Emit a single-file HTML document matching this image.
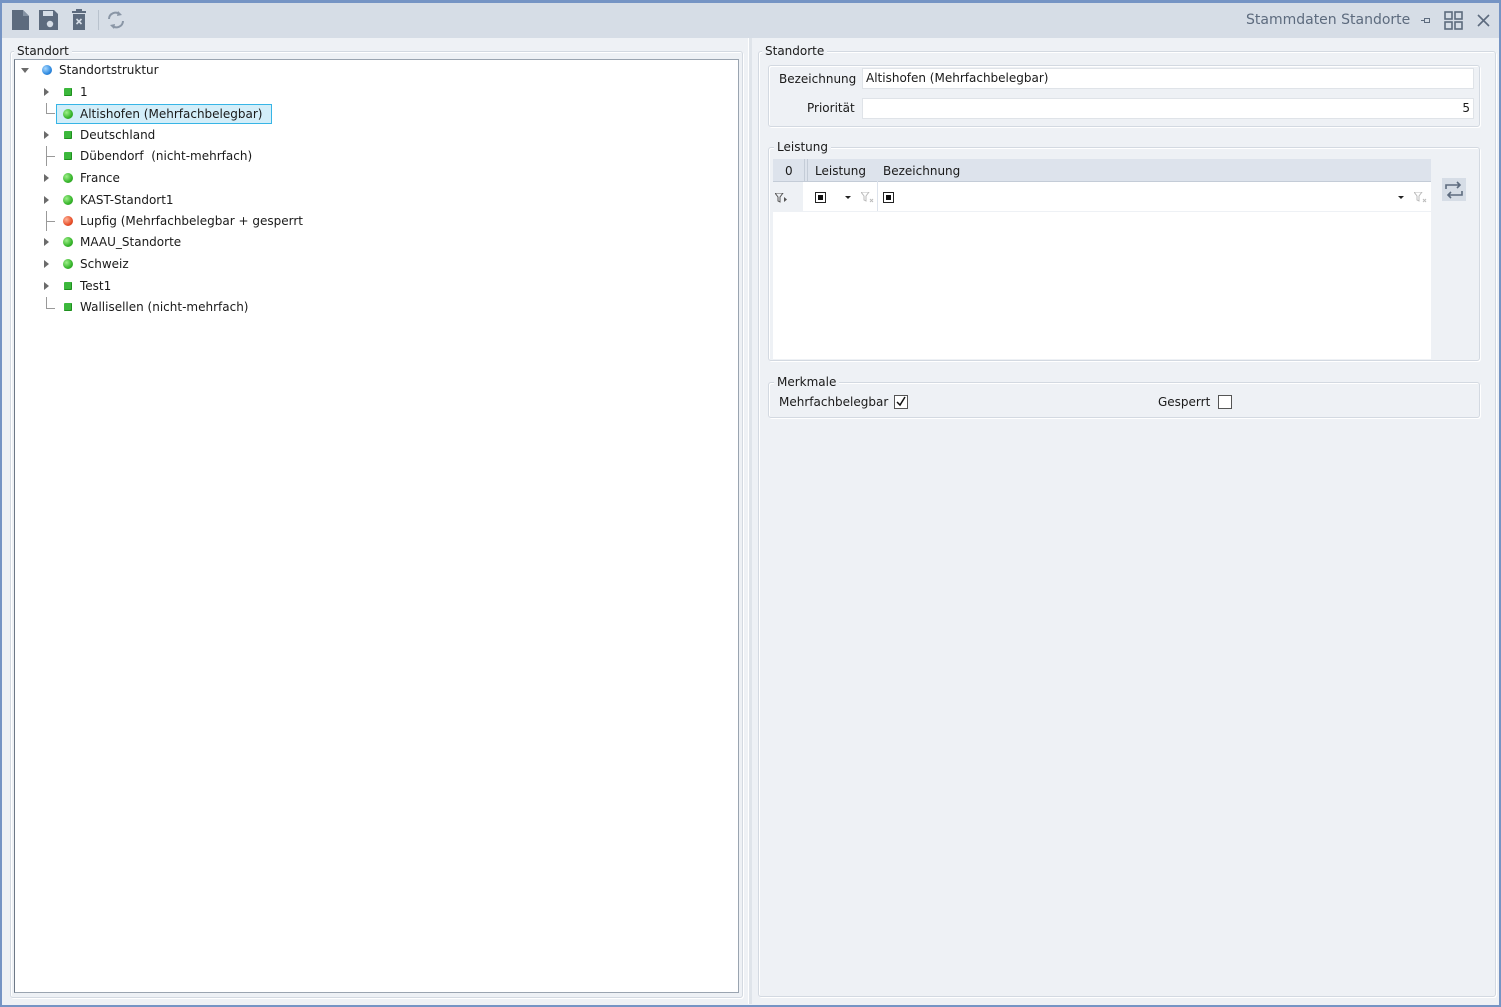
<!DOCTYPE html>
<html><head><meta charset="utf-8"><style>
*{box-sizing:border-box;margin:0;padding:0}
body{width:1501px;height:1007px;overflow:hidden;background:#fff;font-family:"DejaVu Sans","Liberation Sans",sans-serif;font-size:12px;color:#1a1a1a;position:relative}
.a{position:absolute}
.frame{left:0;top:0;width:1501px;height:1007px;border:2px solid #7594c4;border-top:3px solid #7594c4;background:#eef1f5}
.hdr{left:2px;top:3px;width:1497px;height:35px;background:#d6dde6}
.fs{border:1px solid #d3d9e1;border-radius:3px;box-shadow:inset 1px 1px 0 #fff,1px 1px 0 #fff}
.lg{background:#eef1f5;padding:0 3px;font-size:12px}
.tr{position:absolute;left:80px;font-size:12px;white-space:nowrap;margin-top:1px}
.arr{position:absolute;left:44px;width:0;height:0;border-left:5px solid #6b6b6b;border-top:4px solid transparent;border-bottom:4px solid transparent}
.sq{position:absolute;left:64px;width:8px;height:8px;background:#3cb83c;border-radius:1px;box-shadow:inset -1px -1px 0 #1f8f1f}
.dot{position:absolute;left:63px;width:10px;height:10px;border-radius:50%;background:radial-gradient(circle at 35% 35%,#9ef08a,#37b52b 60%,#238a1c)}
.ln{position:absolute;left:46px;border-left:1px solid #999;border-bottom:1px solid #999;width:9px}
.inp{position:absolute;background:#fff;border:1px solid #dfe3e8;font-size:12px;padding:2px 3px;height:21px}
.cb{position:absolute;width:11px;height:11px;border:1px solid #222;background:#fff}
.cb::after{content:"";position:absolute;left:2px;top:2px;width:5px;height:5px;background:#111}
</style></head><body>
<div class="a frame"></div>
<div class="a hdr"></div>
<svg class="a" style="left:10px;top:8px" width="120" height="24" viewBox="0 0 120 24">
 <path d="M2 2h11l6 6v14h-17z" fill="#5d6b7e"/><path d="M13 2v6h6" fill="#8593a4"/>
 <path d="M29 2h15l4 4v16h-19z" fill="#5d6b7e"/><rect x="33" y="3" width="10" height="5" fill="#d6dde6"/><circle cx="40" cy="16" r="3.2" fill="#d6dde6"/>
 <rect x="62" y="3" width="14" height="2" fill="#5d6b7e"/><rect x="66" y="1" width="6" height="3" fill="#5d6b7e"/><path d="M63 6h12v16h-12z" fill="#5d6b7e"/><path d="M66.5 11l5 5M71.5 11l-5 5" stroke="#d6dde6" stroke-width="1.6"/>
 <rect x="88" y="2" width="1" height="20" fill="#b9c2cd"/>
 <path d="M99 11a6.5 6.5 0 0 1 11-4.5" stroke="#8a96a6" stroke-width="2" fill="none"/><path d="M108 3l4 4-5 1z" fill="#8a96a6"/>
 <path d="M113 13a6.5 6.5 0 0 1-11 4.5" stroke="#8a96a6" stroke-width="2" fill="none"/><path d="M104 21l-4-4 5-1z" fill="#8a96a6"/>
</svg>
<div class="a" style="left:1246px;top:12px;font-size:14px;color:#5d6b7e">Stammdaten Standorte</div>
<div class="a" style="left:1424px;top:18px;width:6px;height:5px;border:1px solid #5d6b7e"></div><div class="a" style="left:1421px;top:20px;width:3px;height:1px;background:#5d6b7e"></div>
<svg class="a" style="left:1444px;top:11px" width="20" height="20"><g fill="none" stroke="#5d6b7e" stroke-width="1.6"><rect x="1" y="1" width="7" height="7"/><rect x="11" y="1" width="7" height="7"/><rect x="1" y="11" width="7" height="7"/><rect x="11" y="11" width="7" height="7"/></g></svg>
<svg class="a" style="left:1477px;top:14px" width="14" height="14"><path d="M1 1l11 11M12 1l-11 11" stroke="#5d6b7e" stroke-width="1.6"/></svg>

<div class="a fs" style="left:10px;top:51px;width:733px;height:947px"></div>
<div class="a lg" style="left:14px;top:44px">Standort</div>
<div class="a" style="left:14px;top:59px;width:725px;height:934px;background:#fff;border:1px solid #9aa4b0;border-left-color:#6d7886"></div>
<div class="a" style="left:21px;top:68px;width:0;height:0;border-top:5px solid #6b6b6b;border-left:4px solid transparent;border-right:4px solid transparent"></div>
<div class="a" style="left:42px;top:65px;width:10px;height:10px;border-radius:50%;background:radial-gradient(circle at 35% 35%,#a8d8ff,#2f8ae0 60%,#1a5fb0)"></div>
<div class="tr" style="left:59px;top:62px">Standortstruktur</div>

<div class="arr" style="top:88px"></div><div class="sq" style="top:88px"></div><div class="tr" style="top:84px">1</div>
<div class="ln" style="top:103px;height:11px"></div>
<div class="a" style="left:56px;top:104px;width:216px;height:20px;background:#d3eef9;border:1px solid #37b5e6"></div>
<div class="dot" style="top:109px"></div><div class="tr" style="top:106px">Altishofen (Mehrfachbelegbar)</div>
<div class="arr" style="top:131px"></div><div class="sq" style="top:131px"></div><div class="tr" style="top:127px">Deutschland</div>
<div class="ln" style="top:146px;height:11px"></div><div class="ln" style="top:156px;height:10px;border-bottom:none"></div><div class="sq" style="top:152px"></div><div class="tr" style="top:148px">Dübendorf &nbsp;(nicht-mehrfach)</div>
<div class="arr" style="top:174px"></div><div class="dot" style="top:173px"></div><div class="tr" style="top:170px">France</div>
<div class="arr" style="top:196px"></div><div class="dot" style="top:195px"></div><div class="tr" style="top:192px">KAST-Standort1</div>
<div class="ln" style="top:211px;height:11px"></div><div class="ln" style="top:221px;height:10px;border-bottom:none"></div><div class="dot" style="top:216px;background:radial-gradient(circle at 35% 35%,#ffb49a,#e8502a 60%,#b83010)"></div><div class="tr" style="top:213px">Lupfig (Mehrfachbelegbar + gesperrt</div>
<div class="arr" style="top:238px"></div><div class="dot" style="top:237px"></div><div class="tr" style="top:234px">MAAU_Standorte</div>
<div class="arr" style="top:260px"></div><div class="dot" style="top:259px"></div><div class="tr" style="top:256px">Schweiz</div>
<div class="arr" style="top:282px"></div><div class="sq" style="top:282px"></div><div class="tr" style="top:278px">Test1</div>
<div class="ln" style="top:297px;height:12px"></div><div class="sq" style="top:303px"></div><div class="tr" style="top:299px">Wallisellen (nicht-mehrfach)</div>

<div class="a" style="left:748px;top:38px;width:4px;height:966px;background:#dfe4ea;border-left:1px solid #fff"></div>

<div class="a fs" style="left:758px;top:51px;width:738px;height:946px"></div>
<div class="a lg" style="left:762px;top:44px">Standorte</div>
<div class="a fs" style="left:768px;top:65px;width:712px;height:62px"></div>
<div class="a" style="left:779px;top:72px;font-size:12px">Bezeichnung</div>
<div class="inp" style="left:862px;top:68px;width:612px">Altishofen (Mehrfachbelegbar)</div>
<div class="a" style="left:807px;top:101px;font-size:12px">Priorität</div>
<div class="inp" style="left:862px;top:98px;width:612px;text-align:right">5</div>

<div class="a fs" style="left:768px;top:147px;width:712px;height:214px"></div>
<div class="a lg" style="left:774px;top:140px">Leistung</div>
<div class="a" style="left:773px;top:159px;width:658px;height:200px;background:#fff"></div>
<div class="a" style="left:773px;top:159px;width:658px;height:23px;background:#dde3ec;border-bottom:1px solid #c4ccd7"></div>
<div class="a" style="left:804px;top:159px;width:4px;height:23px;border-left:1px solid #c4ccd7;border-right:1px solid #c4ccd7"></div>
<div class="a" style="left:877px;top:159px;width:1px;height:53px;background:#dde3ec"></div>
<div class="a" style="left:773px;top:182px;width:30px;height:30px;background:#eef1f5"></div>
<div class="a" style="left:785px;top:164px;font-size:12px">0</div>
<div class="a" style="left:815px;top:164px;font-size:12px">Leistung</div>
<div class="a" style="left:883px;top:164px;font-size:12px">Bezeichnung</div>
<div class="a" style="left:803px;top:211px;width:628px;height:1px;background:#eef1f5"></div>
<svg class="a" style="left:775px;top:193px" width="14" height="10"><path d="M0 0h8l-3 4v5l-2-1v-4z" fill="none" stroke="#555"/><path d="M9 4l3 2.5-3 2.5z" fill="#555"/></svg>
<div class="cb" style="left:815px;top:192px"></div>
<div class="a" style="left:845px;top:196px;border-top:3px solid #222;border-left:3px solid transparent;border-right:3px solid transparent"></div>
<svg class="a" style="left:861px;top:192px" width="14" height="11"><path d="M0 0h8l-3 4v5l-2-1v-4z" fill="none" stroke="#bbb"/><path d="M9 7l3 3M12 7l-3 3" stroke="#bbb"/></svg>
<div class="cb" style="left:883px;top:192px"></div>
<div class="a" style="left:1398px;top:196px;border-top:3px solid #222;border-left:3px solid transparent;border-right:3px solid transparent"></div>
<svg class="a" style="left:1414px;top:192px" width="14" height="11"><path d="M0 0h8l-3 4v5l-2-1v-4z" fill="none" stroke="#bbb"/><path d="M9 7l3 3M12 7l-3 3" stroke="#bbb"/></svg>
<div class="a" style="left:1442px;top:178px;width:24px;height:23px;background:#d6dde6"></div>
<svg class="a" style="left:1444px;top:180px" width="20" height="20"><path d="M2 9V5h14M13 2l3 3-3 3M18 11v4H4M7 12l-3 3 3 3" fill="none" stroke="#5d6b7e" stroke-width="1.6"/></svg>

<div class="a fs" style="left:768px;top:382px;width:712px;height:36px"></div>
<div class="a lg" style="left:774px;top:375px">Merkmale</div>
<div class="a" style="left:779px;top:395px;font-size:12px">Mehrfachbelegbar</div>
<div class="a" style="left:894px;top:395px;width:14px;height:14px;border:1px solid #555;background:#fff"></div>
<svg class="a" style="left:895px;top:396px" width="12" height="12"><path d="M2 6l3 3 5-8" fill="none" stroke="#111" stroke-width="1.5"/></svg>
<div class="a" style="left:1158px;top:395px;font-size:12px">Gesperrt</div>
<div class="a" style="left:1218px;top:395px;width:14px;height:14px;border:1px solid #555;background:#fff"></div>
</body></html>
